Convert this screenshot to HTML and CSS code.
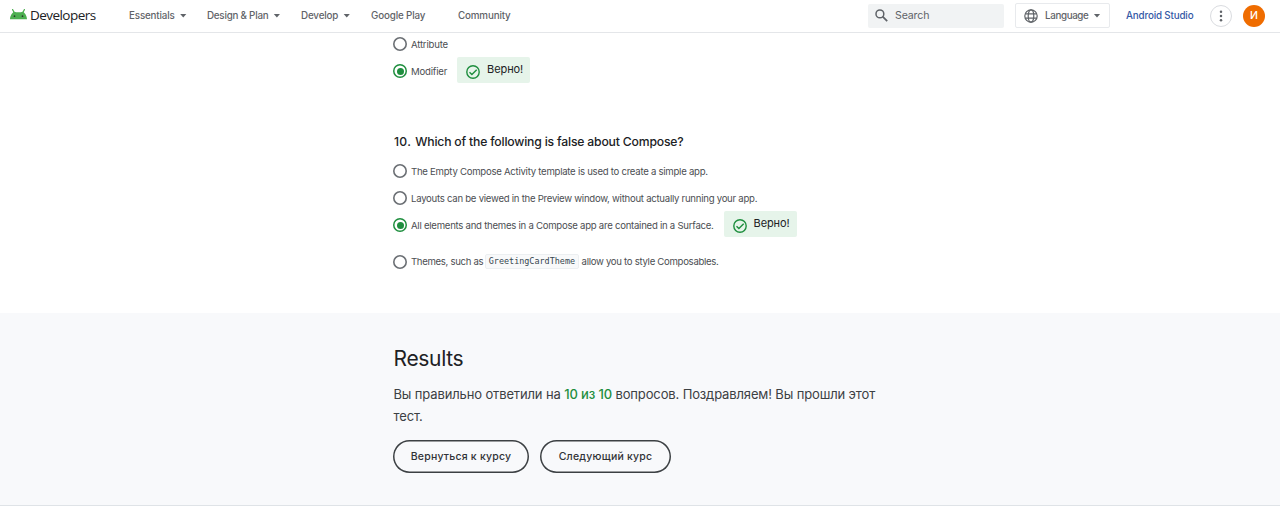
FILE: index.html
```html
<!DOCTYPE html>
<html lang="ru">
<head>
<meta charset="utf-8">
<title>Android Developers</title>
<link rel="stylesheet" href="styles.css">
</head>
<body>
<header class="topbar">
  <a class="brand">
    <svg class="robot" viewBox="0 0 17 11" width="17" height="11"><path d="M2.600.600 4.300 3.800M14.400.600 12.700 3.800" stroke="#4caf50" stroke-width="1.200" stroke-linecap="round"/><path d="M0 10.300C.2 6.500 2.400 3.500 4.200 2.800c1.300 .4 2.800.5 4.300.5s3-.1 4.300-.5c1.800.7 4 3.700 4.200 7.500z" fill="#4caf50"/><circle cx="4.500" cy="7.200" r=".85" fill="#263b2a"/><circle cx="12.500" cy="7.200" r=".85" fill="#263b2a"/></svg>
    <span class="brand-name">Developers</span>
  </a>
  <nav class="tabs">
    <a class="tab tab-essentials"><span>Essentials</span><i class="caret"></i></a>
    <a class="tab tab-design"><span>Design &amp; Plan</span><i class="caret"></i></a>
    <a class="tab tab-develop"><span>Develop</span><i class="caret"></i></a>
    <a class="tab tab-play"><span>Google Play</span></a>
    <a class="tab tab-community"><span>Community</span></a>
  </nav>
  <div class="search">
    <svg viewBox="0 0 13 13" width="13" height="13" fill="none" stroke="#5f6368" stroke-width="1.500"><circle cx="4.900" cy="4.900" r="3.900"/><path d="m7.700 7.700 4.500 4.500" stroke-width="1.800"/></svg>
    <span>Search</span>
  </div>
  <div class="language">
    <svg viewBox="0 0 14 14" width="14" height="14" fill="none" stroke="#5f6368" stroke-width="1.200"><circle cx="7" cy="7" r="6.200"/><ellipse cx="7" cy="7" rx="2.800" ry="6.200"/><path d="M1.300 4.900h11.400M1.300 9.100h11.400"/></svg>
    <span>Language</span><i class="caret"></i>
  </div>
  <a class="studio">Android Studio</a>
  <button class="more" aria-label="More"><svg viewBox="0 0 4 12" width="4" height="12" fill="#5f6368"><circle cx="2" cy="1.800" r="1.250"/><circle cx="2" cy="6" r="1.250"/><circle cx="2" cy="10.200" r="1.250"/></svg></button>
  <div class="avatar">И</div>
</header>
<main>
  <section class="quiz column">
    <div class="option"><i class="radio"></i><span class="t-attribute">Attribute</span></div>
    <div class="option checked"><i class="radio"></i><span class="t-modifier">Modifier</span>
      <div class="correct"><svg viewBox="0 0 14 14" width="14" height="14" fill="none" stroke="#1e8e3e" stroke-width="1.400"><circle cx="7" cy="7" r="6.200"/><path d="m3.500 7.200 2.400 2.400 4.800-4.900"/></svg><span>Верно!</span></div>
    </div>
    <h2 class="question"><span class="question-number">10.</span><span class="question-text">Which of the following is false about Compose?</span></h2>
    <div class="option"><i class="radio"></i><span class="t-empty">The Empty Compose Activity template is used to create a simple app.</span></div>
    <div class="option"><i class="radio"></i><span class="t-layouts">Layouts can be viewed in the Preview window, without actually running your app.</span></div>
    <div class="option checked"><i class="radio"></i><span class="t-surface">All elements and themes in a Compose app are contained in a Surface.</span>
      <div class="correct"><svg viewBox="0 0 14 14" width="14" height="14" fill="none" stroke="#1e8e3e" stroke-width="1.400"><circle cx="7" cy="7" r="6.200"/><path d="m3.500 7.200 2.400 2.400 4.800-4.900"/></svg><span>Верно!</span></div>
    </div>
    <div class="option last"><i class="radio"></i><span class="t-themes">Themes, such as</span><code>GreetingCardTheme</code><span class="t-allow">allow you to style Composables.</span></div>
  </section>
  <section class="results">
    <div class="column">
      <h1>Results</h1>
      <p>Вы правильно ответили на <b>10 из 10</b> вопросов. Поздравляем! Вы прошли этот тест.</p>
      <div class="actions"><button class="pill back">Вернуться к курсу</button><button class="pill next">Следующий курс</button></div>
    </div>
  </section>
</main>
</body>
</html>
```
FILE: styles.css
```css
* { box-sizing: border-box; }
body { margin: 0; height: 528px; overflow: hidden; background: #fff; color: #202124; font-family: Inter, "Noto Sans", sans-serif; white-space: nowrap; }
button { font: inherit; padding: 0; }
.topbar { display: flex; align-items: center; height: 33px; padding: 0 15px 1px 9px; border-bottom: 1px solid #e4e6e9; color: #5f6368; font-size: 9.8px; font-weight: 500; letter-spacing: -.15px; }
.brand { display: flex; align-items: center; width: 120px; gap: 3.500px; height: 28px; margin-top: -2px; padding-left: .5px; }
.brand-name { font-family: "Open Sans", sans-serif; font-size: 13.500px; font-weight: 500; color: #202124; letter-spacing: -.55px; }
.tabs { display: flex; flex: 1; }
.tab { display: flex; align-items: center; gap: 5px; }
.tab-essentials { width: 78px; }
.tab-design { width: 94px; letter-spacing: -.23px; }
.tab-develop { width: 70px; }
.tab-play { width: 87px; }
.caret { width: 7px; height: 4px; background: #5f6368; clip-path: polygon(0 0, 100% 0, 50% 100%); }
.search { display: flex; align-items: center; gap: 7px; width: 136px; height: 24px; margin-right: 11px; padding-left: 7px; background: #f1f3f4; border-radius: 2px; font-size: 10.600px; font-weight: 400; }
.language { display: flex; align-items: center; width: 95px; height: 25px; padding-left: 8px; border: 1px solid #e8eaed; border-radius: 2px; }
.language span { margin: 0 5px 0 7px; letter-spacing: -.36px; }
.studio { width: 84px; padding-left: 16px; color: #3459a6; }
.more { display: grid; place-items: center; width: 22px; height: 22px; margin-right: 11px; margin-left: 16px; border: 1px solid #dadce0; border-radius: 50%; background: #fff; }
.avatar { display: grid; place-items: center; width: 22px; height: 22px; border-radius: 50%; background: #ef6c00; color: #fff; font-size: 10.500px; }
.column { width: 494px; margin-left: 393px; }
.quiz { height: 280px; }
.option { display: flex; align-items: center; height: 27px; font-size: 9.600px; letter-spacing: -.265px; color: #4b4e52; }
.option:first-child { height: 22px; margin-bottom: 2.500px; }
.t-attribute, .t-modifier { letter-spacing: -.2px; }
.t-surface { letter-spacing: -.26px; }
.t-themes { letter-spacing: -.32px; }
.t-allow { letter-spacing: -.3px; }
.radio { display: grid; place-items: center; width: 14px; height: 14px; margin-right: 4px; box-shadow: inset 0 0 0 1.600px #6b6f74; border-radius: 50%; flex: none; }
.checked .radio { box-shadow: inset 0 0 0 1.500px #1e8e3e; }
.checked .radio::after { content: ""; width: 7px; height: 7px; border-radius: 50%; background: #1e8e3e; }
.correct { display: flex; width: 73px; height: 26px; margin: -2px 0 0 10px; padding: 8px 0 0 9px; gap: 7px; border-radius: 2px; background: #e6f4ea; color: #202124; font-size: 11px; letter-spacing: -.1px; line-height: 13px; }
.correct span { margin-top: -2px; }
.correct svg { flex: none; }
.question { display: flex; gap: 4px; height: 16px; margin: 49.500px 0 7.500px; padding-left: 1px; font-size: 12.200px; line-height: 16px; font-weight: 500; }
.question-number { letter-spacing: .3px; }
.question-text { letter-spacing: -.18px; }
.last { margin-top: 9.500px; }
code { margin: 0 3px 0 2px; padding: 0 2.500px; border: 1px solid #eceff1; border-radius: 2px; background: #f8f9fa; color: #37474f; font: 8.450px/13px "DejaVu Sans Mono", monospace; letter-spacing: 0; }
.results { height: 193px; padding-top: 33px; border-bottom: 1px solid #dfe3e7; background: #f8f9fb; }
h1 { margin: 0; padding-left: .5px; font-size: 21px; line-height: 26px; font-weight: 400; letter-spacing: -.33px; }
p { margin: 11px 0 13px; padding-left: .5px; font-size: 13px; line-height: 22px; white-space: normal; color: #3c4043; letter-spacing: -.135px; }
b { color: #1e8e3e; font-weight: 500; }
.actions { display: flex; gap: 11px; }
.pill { height: 33px; border: 0; box-shadow: inset 0 0 0 1.500px #3c4043; border-radius: 17px; background: transparent; color: #303236; font-size: 10.500px; font-weight: 500; letter-spacing: .22px; }
.back { width: 136px; }
.next { width: 131px; }
```
